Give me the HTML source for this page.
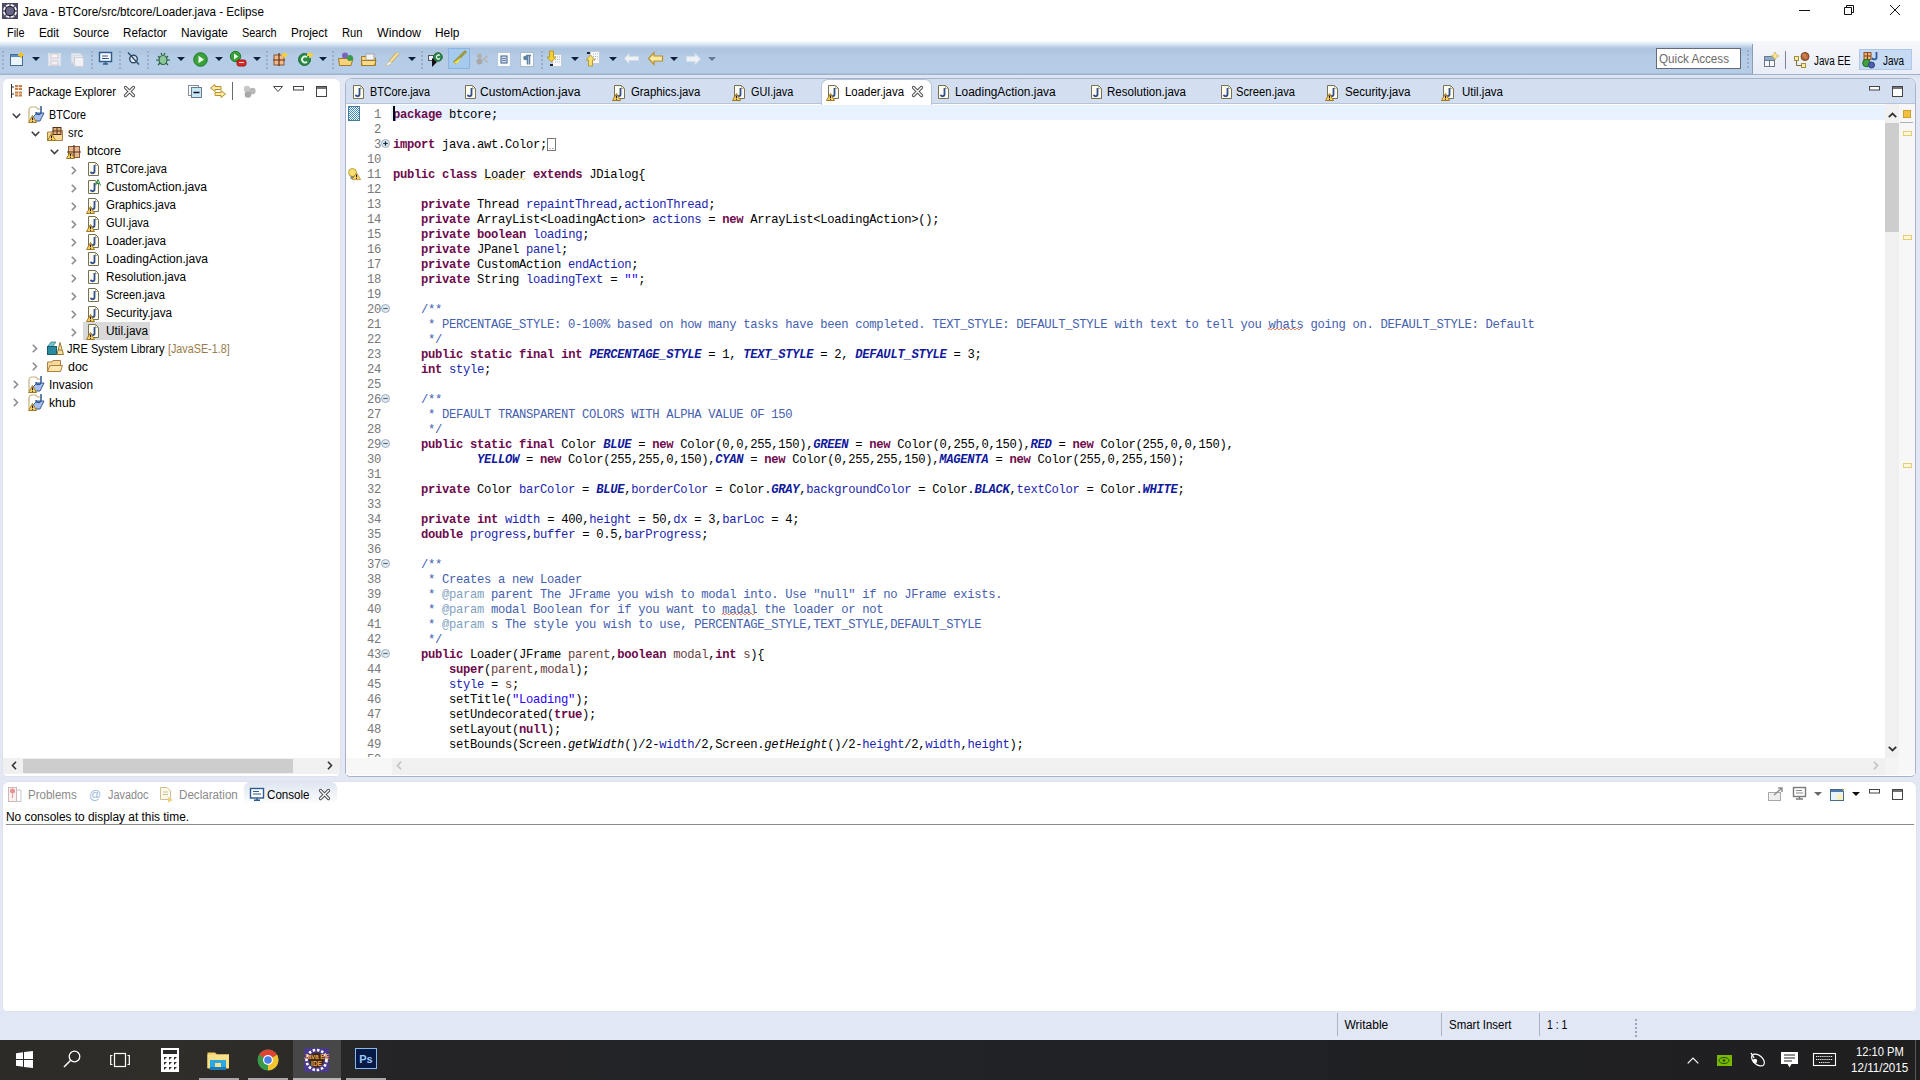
<!DOCTYPE html>
<html><head><meta charset="utf-8">
<style>
*{margin:0;padding:0;box-sizing:border-box}
html,body{width:1920px;height:1080px;overflow:hidden;background:#e3e8f4;font-family:"Liberation Sans",sans-serif;font-size:12px;color:#000;position:relative}
.a{position:absolute}
.t{position:absolute;white-space:pre;line-height:14px;transform-origin:0 0}
.code{position:absolute;font-family:"Liberation Mono",monospace;font-size:12.2px;letter-spacing:-0.31px;line-height:15px;white-space:pre;color:#000}
.k{color:#6e0a4c;font-weight:bold}
.f{color:#1a24b0}
.sf{color:#10189c;font-weight:bold;font-style:italic}
.c{color:#4460ae}
.tg{color:#7f9fbf}
.s{color:#2a00ff}
.p{color:#6a3e3e}
.i{font-style:italic}
svg{position:absolute;overflow:visible}
</style></head><body>
<!-- title + menu -->
<div class="a" style="left:0;top:0;width:1920px;height:42px;background:#fff"></div>
<!-- toolbar -->
<div class="a" style="left:0;top:41px;width:1920px;height:34px;background:linear-gradient(#fafcfe 0,#e8f0f8 2px,#c8d9ec 5px,#afc6e0 7px,#afc7e1 12px,#b4cce6 15px,#b5cde6 32px,#9fb3cc 33px)"></div>
<div class="a" style="left:0;top:75px;width:1920px;height:3px;background:#dde5f3"></div>
<!-- quick access + perspectives -->
<div class="a" style="left:1656px;top:48px;width:85px;height:21px;background:#fff;border:1px solid #646a78"></div>
<div class="a" style="left:1753px;top:42px;width:167px;height:32px;background:linear-gradient(#f5f7fb,#e9edf6)"></div>
<div class="a" style="left:1752px;top:44px;width:1px;height:30px;background:#8e9cb4"></div>
<div class="a" style="left:1859px;top:49px;width:53px;height:21px;background:#c6dbf3;border:1px solid #b0c8e8"></div>

<!-- package explorer panel -->
<div class="a" style="left:2px;top:78px;width:339px;height:699px;background:#fff;border:1px solid #dde3ee;border-radius:7px 7px 5px 5px"></div>
<div class="a" style="left:3px;top:79px;width:337px;height:25px;background:#fff;border-radius:6px 6px 0 0"></div>
<div class="a" style="left:83px;top:322px;width:67px;height:18px;background:#d9d9d9"></div>
<!-- PE h scrollbar -->
<div class="a" style="left:3px;top:758px;width:337px;height:16px;background:#f0f0f0"></div>
<div class="a" style="left:23px;top:759px;width:270px;height:14px;background:#cdcdcd"></div>

<!-- editor panel -->
<div class="a" style="left:345px;top:78px;width:1571px;height:699px;background:#fff;border:1px solid #a5b4cb;border-radius:7px 7px 5px 5px;overflow:hidden">
  <div class="a" style="left:0;top:0;width:1569px;height:25px;background:#d3dff0;border-bottom:1px solid #b5c4d9"></div>
</div>
<div class="a" style="left:821px;top:79px;width:111px;height:26px;background:#fff;border:1px solid #b5c4d9;border-bottom:none;border-radius:7px 7px 0 0"></div>
<div class="a" style="left:391px;top:105px;width:1494px;height:15px;background:#e8f2fe"></div>
<!-- editor scrollbars -->
<div class="a" style="left:1885px;top:104px;width:14px;height:654px;background:#f0f0f0"></div>
<div class="a" style="left:1885px;top:123px;width:14px;height:109px;background:#cdcdcd"></div>
<div class="a" style="left:1899px;top:104px;width:16px;height:671px;background:#f7f7f7"></div>
<div class="a" style="left:1885px;top:758px;width:14px;height:17px;background:#f4f4f4"></div>
<div class="a" style="left:346px;top:758px;width:1539px;height:17px;background:#f0f0f0"></div>
<div class="a" style="left:346px;top:758px;width:46px;height:17px;background:#f7f7f7"></div>
<div class="a" style="left:362px;top:105px;width:22px;height:652px;overflow:hidden"><div class="code" style="left:0;top:3px;width:19px;text-align:right;color:#787878">1
2
3
10
11
12
13
14
15
16
17
18
19
20
21
22
23
24
25
26
27
28
29
30
31
32
33
34
35
36
37
38
39
40
41
42
43
44
45
46
47
48
49
50</div></div>
<div class="a" style="left:393px;top:105px;width:1490px;height:652px;overflow:hidden"><div class="code" style="left:0;top:3px;width:1490px"><span class="k">package</span> btcore;

<span class="k">import</span> java.awt.Color;

<span class="k">public</span> <span class="k">class</span> Loader <span class="k">extends</span> JDialog{

    <span class="k">private</span> Thread <span class="f">repaintThread</span>,<span class="f">actionThread</span>;
    <span class="k">private</span> ArrayList&lt;LoadingAction&gt; <span class="f">actions</span> = <span class="k">new</span> ArrayList&lt;LoadingAction&gt;();
    <span class="k">private</span> <span class="k">boolean</span> <span class="f">loading</span>;
    <span class="k">private</span> JPanel <span class="f">panel</span>;
    <span class="k">private</span> CustomAction <span class="f">endAction</span>;
    <span class="k">private</span> String <span class="f">loadingText</span> = <span class="s">&quot;&quot;</span>;

    <span class="c">/**</span>
    <span class="c"> * PERCENTAGE_STYLE: 0-100% based on how many tasks have been completed. TEXT_STYLE: DEFAULT_STYLE with text to tell you whats going on. DEFAULT_STYLE: Default</span>
    <span class="c"> */</span>
    <span class="k">public</span> <span class="k">static</span> <span class="k">final</span> <span class="k">int</span> <span class="sf">PERCENTAGE_STYLE</span> = 1, <span class="sf">TEXT_STYLE</span> = 2, <span class="sf">DEFAULT_STYLE</span> = 3;
    <span class="k">int</span> <span class="f">style</span>;

    <span class="c">/**</span>
    <span class="c"> * DEFAULT TRANSPARENT COLORS WITH ALPHA VALUE OF 150</span>
    <span class="c"> */</span>
    <span class="k">public</span> <span class="k">static</span> <span class="k">final</span> Color <span class="sf">BLUE</span> = <span class="k">new</span> Color(0,0,255,150),<span class="sf">GREEN</span> = <span class="k">new</span> Color(0,255,0,150),<span class="sf">RED</span> = <span class="k">new</span> Color(255,0,0,150),
            <span class="sf">YELLOW</span> = <span class="k">new</span> Color(255,255,0,150),<span class="sf">CYAN</span> = <span class="k">new</span> Color(0,255,255,150),<span class="sf">MAGENTA</span> = <span class="k">new</span> Color(255,0,255,150);

    <span class="k">private</span> Color <span class="f">barColor</span> = <span class="sf">BLUE</span>,<span class="f">borderColor</span> = Color.<span class="sf">GRAY</span>,<span class="f">backgroundColor</span> = Color.<span class="sf">BLACK</span>,<span class="f">textColor</span> = Color.<span class="sf">WHITE</span>;

    <span class="k">private</span> <span class="k">int</span> <span class="f">width</span> = 400,<span class="f">height</span> = 50,<span class="f">dx</span> = 3,<span class="f">barLoc</span> = 4;
    <span class="k">double</span> <span class="f">progress</span>,<span class="f">buffer</span> = 0.5,<span class="f">barProgress</span>;

    <span class="c">/**</span>
    <span class="c"> * Creates a new Loader</span>
    <span class="c"> * </span><span class="tg">@param</span><span class="c"> parent The JFrame you wish to modal into. Use &quot;null&quot; if no JFrame exists.</span>
    <span class="c"> * </span><span class="tg">@param</span><span class="c"> modal Boolean for if you want to madal the loader or not</span>
    <span class="c"> * </span><span class="tg">@param</span><span class="c"> s The style you wish to use, PERCENTAGE_STYLE,TEXT_STYLE,DEFAULT_STYLE</span>
    <span class="c"> */</span>
    <span class="k">public</span> Loader(JFrame <span class="p">parent</span>,<span class="k">boolean</span> <span class="p">modal</span>,<span class="k">int</span> <span class="p">s</span>){
        <span class="k">super</span>(<span class="p">parent</span>,<span class="p">modal</span>);
        <span class="f">style</span> = <span class="p">s</span>;
        setTitle(<span class="s">&quot;Loading&quot;</span>);
        setUndecorated(<span class="k">true</span>);
        setLayout(<span class="k">null</span>);
        setBounds(Screen.<span class="i">getWidth</span>()/2-<span class="f">width</span>/2,Screen.<span class="i">getHeight</span>()/2-<span class="f">height</span>/2,<span class="f">width</span>,<span class="f">height</span>);
</div></div>
<div class="a" style="left:393px;top:106px;width:2px;height:15px;background:#000"></div>

<!-- console panel -->
<div class="a" style="left:2px;top:781px;width:1915px;height:231px;background:#fff;border:1px solid #dde3ee;border-radius:7px 7px 5px 5px"></div>
<div class="a" style="left:244px;top:782px;width:93px;height:22px;background:linear-gradient(#dfe6f1,#f6f8fb 80%,#fff);border-radius:6px 6px 0 0"></div>
<div class="a" style="left:6px;top:824px;width:1908px;height:1px;background:#8c8c8c"></div>

<!-- status bar -->
<div class="a" style="left:0;top:1012px;width:1920px;height:28px;background:#e1e7f5"></div>
<div class="a" style="left:1337px;top:1013px;width:1px;height:23px;background:#a9b3c3"></div>
<div class="a" style="left:1441px;top:1013px;width:1px;height:23px;background:#a9b3c3"></div>
<div class="a" style="left:1539px;top:1013px;width:1px;height:23px;background:#a9b3c3"></div>

<!-- taskbar -->
<div class="a" style="left:0;top:1040px;width:1920px;height:40px;background:linear-gradient(90deg,#2b2a27 0,#302e29 150px,#2c2b28 280px,#242427 400px,#222326 700px,#202124 1300px,#1f1f20 1920px)"></div>
<div class="a" style="left:293px;top:1040px;width:48px;height:40px;background:#474747"></div>
<div class="a" style="left:199px;top:1078px;width:40px;height:2px;background:#a8a8a8"></div>
<div class="a" style="left:248px;top:1078px;width:40px;height:2px;background:#a8a8a8"></div>
<div class="a" style="left:293px;top:1078px;width:48px;height:2px;background:#b8b8b8"></div>
<div class="a" style="left:346px;top:1078px;width:40px;height:2px;background:#a8a8a8"></div>

<svg style="left:2px;top:3px" width="16" height="16" viewBox="0 0 16 16"><rect x="0" y="0" width="16" height="16" fill="#4c4862"/><circle cx="8" cy="8" r="7" fill="#fff"/><path d="M8 1V3M8 13V15M1 8H3M13 8H15M3 3L4.5 4.5M13 3L11.5 4.5M3 13L4.5 11.5M13 13L11.5 11.5" stroke="#4c4862" stroke-width="1.3"/><circle cx="8" cy="8" r="4.6" fill="#6a6688" stroke="#25223a" stroke-width="1.3"/></svg>
<svg style="left:1799px;top:10px" width="11" height="1" viewBox="0 0 11 1"><rect width="11" height="1" fill="#111"/></svg>
<svg style="left:1844px;top:5px" width="10" height="10" viewBox="0 0 10 10"><path d="M2.5 2.5V0.5H9.5V7.5H7.5M0.5 2.5H7.5V9.5H0.5Z" fill="none" stroke="#111"/></svg>
<svg style="left:1890px;top:5px" width="10" height="10" viewBox="0 0 10 10"><path d="M0 0L10 10M10 0L0 10" stroke="#111" stroke-width="1"/></svg>
<div class="a" style="left:2px;top:51px;width:2px;height:2px;background:#9aaecb"></div>
<div class="a" style="left:2px;top:55px;width:2px;height:2px;background:#9aaecb"></div>
<div class="a" style="left:2px;top:59px;width:2px;height:2px;background:#9aaecb"></div>
<div class="a" style="left:2px;top:63px;width:2px;height:2px;background:#9aaecb"></div>
<div class="a" style="left:2px;top:67px;width:2px;height:2px;background:#9aaecb"></div>
<div class="a" style="left:91px;top:51px;width:2px;height:2px;background:#9aaecb"></div>
<div class="a" style="left:91px;top:55px;width:2px;height:2px;background:#9aaecb"></div>
<div class="a" style="left:91px;top:59px;width:2px;height:2px;background:#9aaecb"></div>
<div class="a" style="left:91px;top:63px;width:2px;height:2px;background:#9aaecb"></div>
<div class="a" style="left:91px;top:67px;width:2px;height:2px;background:#9aaecb"></div>
<div class="a" style="left:119px;top:51px;width:2px;height:2px;background:#9aaecb"></div>
<div class="a" style="left:119px;top:55px;width:2px;height:2px;background:#9aaecb"></div>
<div class="a" style="left:119px;top:59px;width:2px;height:2px;background:#9aaecb"></div>
<div class="a" style="left:119px;top:63px;width:2px;height:2px;background:#9aaecb"></div>
<div class="a" style="left:119px;top:67px;width:2px;height:2px;background:#9aaecb"></div>
<div class="a" style="left:147px;top:51px;width:2px;height:2px;background:#9aaecb"></div>
<div class="a" style="left:147px;top:55px;width:2px;height:2px;background:#9aaecb"></div>
<div class="a" style="left:147px;top:59px;width:2px;height:2px;background:#9aaecb"></div>
<div class="a" style="left:147px;top:63px;width:2px;height:2px;background:#9aaecb"></div>
<div class="a" style="left:147px;top:67px;width:2px;height:2px;background:#9aaecb"></div>
<div class="a" style="left:266px;top:51px;width:2px;height:2px;background:#9aaecb"></div>
<div class="a" style="left:266px;top:55px;width:2px;height:2px;background:#9aaecb"></div>
<div class="a" style="left:266px;top:59px;width:2px;height:2px;background:#9aaecb"></div>
<div class="a" style="left:266px;top:63px;width:2px;height:2px;background:#9aaecb"></div>
<div class="a" style="left:266px;top:67px;width:2px;height:2px;background:#9aaecb"></div>
<div class="a" style="left:332px;top:51px;width:2px;height:2px;background:#9aaecb"></div>
<div class="a" style="left:332px;top:55px;width:2px;height:2px;background:#9aaecb"></div>
<div class="a" style="left:332px;top:59px;width:2px;height:2px;background:#9aaecb"></div>
<div class="a" style="left:332px;top:63px;width:2px;height:2px;background:#9aaecb"></div>
<div class="a" style="left:332px;top:67px;width:2px;height:2px;background:#9aaecb"></div>
<div class="a" style="left:421px;top:51px;width:2px;height:2px;background:#9aaecb"></div>
<div class="a" style="left:421px;top:55px;width:2px;height:2px;background:#9aaecb"></div>
<div class="a" style="left:421px;top:59px;width:2px;height:2px;background:#9aaecb"></div>
<div class="a" style="left:421px;top:63px;width:2px;height:2px;background:#9aaecb"></div>
<div class="a" style="left:421px;top:67px;width:2px;height:2px;background:#9aaecb"></div>
<div class="a" style="left:541px;top:51px;width:2px;height:2px;background:#9aaecb"></div>
<div class="a" style="left:541px;top:55px;width:2px;height:2px;background:#9aaecb"></div>
<div class="a" style="left:541px;top:59px;width:2px;height:2px;background:#9aaecb"></div>
<div class="a" style="left:541px;top:63px;width:2px;height:2px;background:#9aaecb"></div>
<div class="a" style="left:541px;top:67px;width:2px;height:2px;background:#9aaecb"></div>
<svg style="left:10px;top:52px" width="15" height="15" viewBox="0 0 15 15"><rect x="0.5" y="2.5" width="12" height="11" fill="#eaf4fc" stroke="#4a6a8a"/><rect x="1" y="3" width="11" height="2" fill="#5a8ac0"/><path d="M11 0V6M8 3H14" stroke="#f0c030" stroke-width="2"/></svg>
<svg style="left:32px;top:57px" width="8" height="4" viewBox="0 0 8 4"><path d="M0 0H8L4 4Z" fill="#10203a"/></svg>
<svg style="left:48px;top:53px" width="13" height="13" viewBox="0 0 13 13"><rect x="0.5" y="0.5" width="12" height="12" fill="#e6ecf3" stroke="#d8dfe8"/><rect x="3" y="1" width="7" height="4" fill="#f4f6f8" stroke="#d6c6cc"/><rect x="3" y="8" width="7" height="4" fill="#f0f0f4" stroke="#d6c6cc"/></svg>
<svg style="left:71px;top:53px" width="13" height="14" viewBox="0 0 13 14"><rect x="0.5" y="0.5" width="9" height="9" fill="#e2e8f0" stroke="#d6dde6"/><rect x="2.5" y="2.5" width="9" height="9" fill="#e6ecf3" stroke="#d6dde6"/><rect x="3.5" y="4.5" width="9" height="9" fill="#eef1f5" stroke="#d8cdd2"/></svg>
<svg style="left:99px;top:52px" width="13" height="13" viewBox="0 0 13 13"><rect x="0.5" y="0.5" width="12" height="9" fill="#fff" stroke="#2e5b8e" stroke-width="1.5"/><path d="M3 4H9M3 6.5H10" stroke="#2e5b8e" stroke-width="1.2"/><path d="M4 12H9M6.5 10V12" stroke="#2e5b8e" stroke-width="1.5"/></svg>
<svg style="left:127px;top:52px" width="13" height="13" viewBox="0 0 13 13"><circle cx="6.5" cy="7" r="3.8" fill="#dfe8f2" stroke="#2e4a68" stroke-width="1.4"/><path d="M1 0.5L12 12.5" stroke="#2e4a68" stroke-width="1.3"/></svg>
<svg style="left:155px;top:52px" width="16" height="15" viewBox="0 0 16 15"><ellipse cx="8" cy="8" rx="4" ry="4.5" fill="#8ec89a" stroke="#2a6a48" stroke-width="1.2"/><path d="M3 4L5 6M13 4L11 6M1 8H4M15 8H12M3 13L5 11M13 13L11 11M6 1L7 3M10 1L9 3" stroke="#2a5a40" stroke-width="1.2"/></svg>
<svg style="left:177px;top:57px" width="8" height="4" viewBox="0 0 8 4"><path d="M0 0H8L4 4Z" fill="#10203a"/></svg>
<svg style="left:193px;top:52px" width="15" height="15" viewBox="0 0 15 15"><circle cx="7.5" cy="7.5" r="6.8" fill="#3aa03a" stroke="#1f7a2a"/><path d="M5.5 3.8V11.2L11 7.5Z" fill="#f2fff0"/></svg>
<svg style="left:215px;top:57px" width="8" height="4" viewBox="0 0 8 4"><path d="M0 0H8L4 4Z" fill="#10203a"/></svg>
<svg style="left:230px;top:51px" width="17" height="16" viewBox="0 0 17 16"><circle cx="5.5" cy="5.5" r="5.2" fill="#3aa03a" stroke="#1f7a2a"/><path d="M4 2.5V8.5L8.2 5.5Z" fill="#eaffea"/><rect x="7" y="9" width="9" height="6" rx="2" fill="#d82828" stroke="#a01818"/><path d="M9 11.5H14" stroke="#fff" stroke-width=".8"/></svg>
<svg style="left:253px;top:57px" width="8" height="4" viewBox="0 0 8 4"><path d="M0 0H8L4 4Z" fill="#10203a"/></svg>
<svg style="left:273px;top:52px" width="15" height="14" viewBox="0 0 15 14"><rect x="1" y="3" width="10" height="10" fill="#f2b888" stroke="#8a5030"/><path d="M6 1V14M0 8H12" stroke="#5a3018" stroke-width="1.2"/><path d="M11.5 0V6M8.5 3H14.5" stroke="#f4d040" stroke-width="2"/></svg>
<svg style="left:298px;top:52px" width="15" height="14" viewBox="0 0 15 14"><circle cx="6.5" cy="7.5" r="6" fill="#2f8a48" stroke="#1f6a38"/><path d="M9 5.2A3 3 0 1 0 9 9.8" fill="none" stroke="#e8ffe8" stroke-width="1.8"/><path d="M12 0V6M9 3H15" stroke="#f4d040" stroke-width="2"/></svg>
<svg style="left:319px;top:57px" width="8" height="4" viewBox="0 0 8 4"><path d="M0 0H8L4 4Z" fill="#10203a"/></svg>
<svg style="left:338px;top:52px" width="16" height="14" viewBox="0 0 16 14"><path d="M0.5 6.5H15L13 13.5H1.5Z" fill="#f6d27a" stroke="#a0782a"/><circle cx="7" cy="3.5" r="3" fill="#7a62c0"/><circle cx="12" cy="6" r="3" fill="#3a9a4a"/></svg>
<svg style="left:361px;top:53px" width="16" height="13" viewBox="0 0 16 13"><path d="M0.5 3.5H6L7 5H14.5V12.5H0.5Z" fill="#f6d27a" stroke="#a0782a"/><rect x="5" y="1" width="8" height="6" fill="#f4f4f4" stroke="#aaa"/><path d="M0.5 7.5H15L13.5 12.5H1Z" fill="#f8dc8a" stroke="#a0782a"/></svg>
<svg style="left:384px;top:52px" width="16" height="14" viewBox="0 0 16 14"><path d="M14 1L6 10" stroke="#c8a860" stroke-width="4"/><path d="M14 1L6 10" stroke="#f4e0a0" stroke-width="2"/><path d="M6 9L1 13.5L4 13.5L8 11Z" fill="#f4f4f0" stroke="#c0b090" stroke-width=".7"/></svg>
<svg style="left:408px;top:57px" width="8" height="4" viewBox="0 0 8 4"><path d="M0 0H8L4 4Z" fill="#10203a"/></svg>
<svg style="left:428px;top:52px" width="15" height="15" viewBox="0 0 15 15"><rect x="0.5" y="3.5" width="5" height="5" fill="#eef" stroke="#555"/><path d="M4 6V15L9 10Z" fill="#111"/><circle cx="10" cy="5" r="4.3" fill="#2f8a48" stroke="#1f6a38"/><path d="M11.8 3.5A2 2 0 1 0 11.8 6.5" fill="none" stroke="#fff" stroke-width="1.2"/></svg>
<div class="a" style="left:448px;top:48px;width:22px;height:21px;background:#a6c9ee;border:1px solid #8ab4e4"></div>
<svg style="left:452px;top:51px" width="15" height="14" viewBox="0 0 15 14"><path d="M14 0L2 12" stroke="#9a9840" stroke-width="3"/><path d="M9 6L1 12.5L6 12Z" fill="#f0e040"/></svg>
<svg style="left:475px;top:52px" width="14" height="13" viewBox="0 0 14 13"><circle cx="4.5" cy="4" r="2.5" fill="#b0b0b0"/><circle cx="4.5" cy="9.5" r="3" fill="#a8a8a8"/><path d="M8 7L13 4M8 7L13 10" stroke="#b6b6b6" stroke-width="2"/></svg>
<svg style="left:497px;top:52px" width="14" height="15" viewBox="0 0 14 15"><rect x="0.5" y="0.5" width="13" height="14" fill="#f8fafc" stroke="#9aa8b8" stroke-dasharray="1 1"/><rect x="4" y="4" width="6" height="7" fill="#dfe6f0" stroke="#3a5a8a"/><path d="M5 6.5H9M5 8.5H9" stroke="#3a5a8a" stroke-width=".8"/></svg>
<svg style="left:520px;top:52px" width="14" height="15" viewBox="0 0 14 15"><rect x="0.5" y="0.5" width="13" height="14" fill="#fafcfd" stroke="#a8b8c8"/><path d="M6 3.5H11M7.5 3.5V12.5M9.5 3.5V12.5" stroke="#6080a0" stroke-width="1.5"/><circle cx="5.5" cy="6" r="2.3" fill="#6080a0"/></svg>
<svg style="left:547px;top:51px" width="15" height="16" viewBox="0 0 15 16"><rect x="5.5" y="3.5" width="9" height="12" fill="#f6f8fb" stroke="#c0ccd8"/><path d="M8 6H13M8 8.5H13M8 11H13" stroke="#b0b8c8" stroke-dasharray="1 1"/><path d="M2.5 0H6.5V6H9L4.5 11L0 6H2.5Z" fill="#f6d030" stroke="#b08a20" stroke-width=".8"/><rect x="3" y="13" width="3" height="2" fill="#223"/></svg>
<svg style="left:571px;top:57px" width="8" height="4" viewBox="0 0 8 4"><path d="M0 0H8L4 4Z" fill="#10203a"/></svg>
<svg style="left:586px;top:51px" width="14" height="16" viewBox="0 0 14 16"><rect x="4.5" y="0.5" width="9" height="12" fill="#f6f8fb" stroke="#c0ccd8"/><path d="M7 3H12M7 5.5H12M7 8H12" stroke="#b0b8c8" stroke-dasharray="1 1"/><path d="M2.5 15H6.5V9H9L4.5 4L0 9H2.5Z" fill="#f6e070" stroke="#b08a20" stroke-width=".8"/><rect x="1" y="1" width="3" height="2" fill="#223"/></svg>
<svg style="left:609px;top:57px" width="8" height="4" viewBox="0 0 8 4"><path d="M0 0H8L4 4Z" fill="#10203a"/></svg>
<svg style="left:624px;top:53px" width="15" height="11" viewBox="0 0 15 11"><path d="M5 0.5L0.5 5.5L5 10.5V7.5H14.5V3.5H5Z" fill="#eef2f7" stroke="#d4dce6"/></svg>
<svg style="left:648px;top:52px" width="15" height="13" viewBox="0 0 15 13"><path d="M6 0.5L0.5 6.5L6 12.5V9H14.5V4H6Z" fill="#fbeaa0" stroke="#b89030" stroke-width="1.2"/></svg>
<svg style="left:670px;top:57px" width="8" height="4" viewBox="0 0 8 4"><path d="M0 0H8L4 4Z" fill="#10203a"/></svg>
<svg style="left:686px;top:53px" width="15" height="12" viewBox="0 0 15 12"><path d="M9 0.5L14.5 6L9 11.5V8.5H0.5V3.5H9Z" fill="#eef2f7" stroke="#d4dce6"/></svg>
<svg style="left:708px;top:57px" width="8" height="4" viewBox="0 0 8 4"><path d="M0 0H8L4 4Z" fill="#6a7a90"/></svg>
<div class="a" style="left:1747px;top:50px;width:2px;height:2px;background:#9aaecb"></div>
<div class="a" style="left:1747px;top:54px;width:2px;height:2px;background:#9aaecb"></div>
<div class="a" style="left:1747px;top:58px;width:2px;height:2px;background:#9aaecb"></div>
<div class="a" style="left:1747px;top:62px;width:2px;height:2px;background:#9aaecb"></div>
<div class="a" style="left:1747px;top:66px;width:2px;height:2px;background:#9aaecb"></div>
<svg style="left:1764px;top:52px" width="15" height="15" viewBox="0 0 15 15"><rect x="0.5" y="4.5" width="10" height="10" fill="#f6f8fa" stroke="#6a7888"/><path d="M0.5 8.5H10.5M5.5 4.5V14.5" stroke="#6a7888"/><rect x="1" y="5" width="9" height="3" fill="#8aaad0"/><path d="M11 0L12.5 3L15 4L12.5 5L11 8L9.5 5L7 4L9.5 3Z" fill="#f8e890" stroke="#c8a040" stroke-width=".6"/></svg>
<div class="a" style="left:1785px;top:51px;width:1px;height:18px;background:#7a8494"></div>
<svg style="left:1794px;top:52px" width="16" height="16" viewBox="0 0 16 16"><rect x="0.5" y="4.5" width="4" height="4" fill="#f8f0a0" stroke="#a09040"/><rect x="7.5" y="11.5" width="4" height="4" fill="#f8f0a0" stroke="#a09040"/><path d="M2.5 8.5V13.5H7.5" fill="none" stroke="#806a40"/><circle cx="11" cy="4.5" r="4" fill="#b86a3a" stroke="#7a4020"/><path d="M8.5 3L13 6.5M9 2L12 4" stroke="#e0a070" stroke-width=".8"/></svg>
<svg style="left:1862px;top:52px" width="17" height="16" viewBox="0 0 17 16"><rect x="2" y="0.5" width="7" height="7" fill="#f0b070" stroke="#8a5030"/><path d="M5.5 0.5V7.5M2 4H9" stroke="#7a4020"/><path d="M14.5 0V6A2.5 2.5 0 0 1 10 6" fill="none" stroke="#2f5a98" stroke-width="1.8"/><circle cx="4.5" cy="11" r="3.8" fill="#40a040" stroke="#206a20"/><circle cx="9.5" cy="13" r="3" fill="#5060b0" stroke="#304080"/></svg>
<svg style="left:10px;top:84px" width="13" height="14" viewBox="0 0 13 14"><path d="M1.5 0V14" stroke="#333" stroke-width="1"/><path d="M1.5 3H4M1.5 10H4" stroke="#333"/><rect x="5" y="1" width="7" height="5" fill="#c8804a"/><rect x="5" y="7.5" width="7" height="5" fill="#c8804a"/><path d="M8.5 1V6M5 3.5H12M8.5 7.5V12.5M5 10H12" stroke="#fff" stroke-width=".7"/></svg>
<svg style="left:124px;top:86px" width="11" height="11" viewBox="0 0 11 11"><path d="M1.5 1.5L9.5 9.5M9.5 1.5L1.5 9.5" stroke="#4a4a4a" stroke-width="3.2" stroke-linecap="round"/><path d="M1.5 1.5L9.5 9.5M9.5 1.5L1.5 9.5" stroke="#fff" stroke-width="1.4" stroke-linecap="round"/></svg>
<svg style="left:188px;top:85px" width="14" height="13" viewBox="0 0 14 13"><rect x="0.5" y="0.5" width="10" height="10" fill="#fff" stroke="#8090a0"/><rect x="3.5" y="2.5" width="10" height="10" fill="#c8e8f8" stroke="#6a7a8a"/><path d="M5.5 7.5H11.5" stroke="#111" stroke-width="1.5"/></svg>
<svg style="left:210px;top:84px" width="16" height="15" viewBox="0 0 16 15"><path d="M5 0.5L0.5 4L5 7.5V5.5H11V2.5H5Z" fill="#fbe9a8" stroke="#b8902a"/><path d="M11 6.5L15.5 10L11 13.5V11.5H5V8.5H11Z" fill="#fbe9a8" stroke="#b8902a"/></svg>
<div class="a" style="left:232px;top:82px;width:1px;height:18px;background:#6a6a6a"></div>
<svg style="left:243px;top:85px" width="13" height="13" viewBox="0 0 13 13"><circle cx="4" cy="4" r="3.2" fill="#c8c8c8"/><circle cx="9.5" cy="6" r="3.2" fill="#b8b8b8"/><circle cx="5" cy="9.5" r="3.3" fill="#a8a8a8"/></svg>
<svg style="left:273px;top:86px" width="10" height="6" viewBox="0 0 10 6"><path d="M0.5 0.5H9.5L5 5.5Z" fill="#fff" stroke="#444"/></svg>
<svg style="left:293px;top:86px" width="11" height="5" viewBox="0 0 11 5"><rect x="0.5" y="0.5" width="10" height="3.5" fill="#fff" stroke="#444"/></svg>
<svg style="left:316px;top:86px" width="11" height="11" viewBox="0 0 11 11"><rect x="0.5" y="0.5" width="10" height="10" fill="#fff" stroke="#444"/><path d="M0.5 2H10.5" stroke="#444" stroke-width="1.5"/></svg>
<svg style="left:12px;top:113px" width="9" height="6" viewBox="0 0 9 6"><path d="M0.8 0.8L4.5 4.5L8.2 0.8" fill="none" stroke="#404040" stroke-width="1.6"/></svg>
<svg style="left:28px;top:106px" width="17" height="17" viewBox="0 0 17 17"><path d="M1 15V4A3 3 0 0 1 4 1H8L9.5 3H13" fill="none" stroke="#c8b080" stroke-width="1.2"/><path d="M5 11L9 7H16L12 15H5Z" fill="#a8c0f0" stroke="#3a5a90"/><path d="M13 0V6A2.5 2.5 0 0 1 8 6" fill="none" stroke="#2f5a98" stroke-width="1.5"/></svg>
<svg style="left:28px;top:115px" width="9" height="8" viewBox="0 0 9 8"><path d="M4.5 0.5L8.5 7.5H0.5Z" fill="#fad465" stroke="#a07828" stroke-width="1" stroke-linejoin="round"/><path d="M4.5 2.6V5M4.5 5.8V6.8" stroke="#1a1a1a" stroke-width="1.1"/></svg>
<svg style="left:31px;top:131px" width="9" height="6" viewBox="0 0 9 6"><path d="M0.8 0.8L4.5 4.5L8.2 0.8" fill="none" stroke="#404040" stroke-width="1.6"/></svg>
<svg style="left:47px;top:127px" width="16" height="14" viewBox="0 0 16 14"><path d="M0.5 13.5V5H5L6 3.5H15.5V13.5Z" fill="#f6d89a" stroke="#b08040"/><rect x="6" y="0.5" width="8" height="7" fill="#e0b080" stroke="#5a3018"/><path d="M10 0.5V7.5M6 4H14" stroke="#5a3018"/></svg>
<svg style="left:47px;top:133px" width="9" height="8" viewBox="0 0 9 8"><path d="M4.5 0.5L8.5 7.5H0.5Z" fill="#fad465" stroke="#a07828" stroke-width="1" stroke-linejoin="round"/><path d="M4.5 2.6V5M4.5 5.8V6.8" stroke="#1a1a1a" stroke-width="1.1"/></svg>
<svg style="left:50px;top:149px" width="9" height="6" viewBox="0 0 9 6"><path d="M0.8 0.8L4.5 4.5L8.2 0.8" fill="none" stroke="#404040" stroke-width="1.6"/></svg>
<svg style="left:66px;top:145px" width="15" height="13" viewBox="0 0 15 13"><rect x="2.5" y="1.5" width="11" height="11" fill="#e6b894" stroke="#8a5a38"/><path d="M8 0V13M1 7H15" stroke="#5a3018" stroke-width="1.2"/></svg>
<svg style="left:66px;top:151px" width="9" height="8" viewBox="0 0 9 8"><path d="M4.5 0.5L8.5 7.5H0.5Z" fill="#fad465" stroke="#a07828" stroke-width="1" stroke-linejoin="round"/><path d="M4.5 2.6V5M4.5 5.8V6.8" stroke="#1a1a1a" stroke-width="1.1"/></svg>
<svg style="left:71px;top:166px" width="6" height="9" viewBox="0 0 6 9"><path d="M0.8 0.8L4.5 4.5L0.8 8.2" fill="none" stroke="#8c8c8c" stroke-width="1.6"/></svg>
<svg style="left:88px;top:162px" width="11" height="14" viewBox="0 0 11 14"><path d="M0.5 0.5H7.5L10.5 3.5V13.5H0.5Z" fill="#fcfcf2" stroke="#767252"/><path d="M7.5 0.5V3.5H10.5" fill="none" stroke="#a8a478" stroke-width=".8"/><path d="M6.5 3V9A2 2 0 0 1 2.6 9.8" fill="none" stroke="#34508a" stroke-width="1.8"/></svg>
<svg style="left:71px;top:184px" width="6" height="9" viewBox="0 0 6 9"><path d="M0.8 0.8L4.5 4.5L0.8 8.2" fill="none" stroke="#8c8c8c" stroke-width="1.6"/></svg>
<svg style="left:88px;top:180px" width="11" height="14" viewBox="0 0 11 14"><path d="M0.5 0.5H7.5L10.5 3.5V13.5H0.5Z" fill="#fcfcf2" stroke="#767252"/><path d="M7.5 0.5V3.5H10.5" fill="none" stroke="#a8a478" stroke-width=".8"/><path d="M6.5 3V9A2 2 0 0 1 2.6 9.8" fill="none" stroke="#34508a" stroke-width="1.8"/></svg>
<svg style="left:95px;top:179px" width="6" height="7" viewBox="0 0 6 7"><path d="M0.5 6.5L3 0.5L5.5 6.5M1.5 4.5H4.5" fill="none" stroke="#2a8a40" stroke-width="1"/></svg>
<svg style="left:71px;top:202px" width="6" height="9" viewBox="0 0 6 9"><path d="M0.8 0.8L4.5 4.5L0.8 8.2" fill="none" stroke="#8c8c8c" stroke-width="1.6"/></svg>
<svg style="left:88px;top:198px" width="11" height="14" viewBox="0 0 11 14"><path d="M0.5 0.5H7.5L10.5 3.5V13.5H0.5Z" fill="#fcfcf2" stroke="#767252"/><path d="M7.5 0.5V3.5H10.5" fill="none" stroke="#a8a478" stroke-width=".8"/><path d="M6.5 3V9A2 2 0 0 1 2.6 9.8" fill="none" stroke="#34508a" stroke-width="1.8"/></svg>
<svg style="left:86px;top:206px" width="9" height="8" viewBox="0 0 9 8"><path d="M4.5 0.5L8.5 7.5H0.5Z" fill="#fad465" stroke="#a07828" stroke-width="1" stroke-linejoin="round"/><path d="M4.5 2.6V5M4.5 5.8V6.8" stroke="#1a1a1a" stroke-width="1.1"/></svg>
<svg style="left:71px;top:220px" width="6" height="9" viewBox="0 0 6 9"><path d="M0.8 0.8L4.5 4.5L0.8 8.2" fill="none" stroke="#8c8c8c" stroke-width="1.6"/></svg>
<svg style="left:88px;top:216px" width="11" height="14" viewBox="0 0 11 14"><path d="M0.5 0.5H7.5L10.5 3.5V13.5H0.5Z" fill="#fcfcf2" stroke="#767252"/><path d="M7.5 0.5V3.5H10.5" fill="none" stroke="#a8a478" stroke-width=".8"/><path d="M6.5 3V9A2 2 0 0 1 2.6 9.8" fill="none" stroke="#34508a" stroke-width="1.8"/></svg>
<svg style="left:86px;top:224px" width="9" height="8" viewBox="0 0 9 8"><path d="M4.5 0.5L8.5 7.5H0.5Z" fill="#fad465" stroke="#a07828" stroke-width="1" stroke-linejoin="round"/><path d="M4.5 2.6V5M4.5 5.8V6.8" stroke="#1a1a1a" stroke-width="1.1"/></svg>
<svg style="left:71px;top:238px" width="6" height="9" viewBox="0 0 6 9"><path d="M0.8 0.8L4.5 4.5L0.8 8.2" fill="none" stroke="#8c8c8c" stroke-width="1.6"/></svg>
<svg style="left:88px;top:234px" width="11" height="14" viewBox="0 0 11 14"><path d="M0.5 0.5H7.5L10.5 3.5V13.5H0.5Z" fill="#fcfcf2" stroke="#767252"/><path d="M7.5 0.5V3.5H10.5" fill="none" stroke="#a8a478" stroke-width=".8"/><path d="M6.5 3V9A2 2 0 0 1 2.6 9.8" fill="none" stroke="#34508a" stroke-width="1.8"/></svg>
<svg style="left:86px;top:242px" width="9" height="8" viewBox="0 0 9 8"><path d="M4.5 0.5L8.5 7.5H0.5Z" fill="#fad465" stroke="#a07828" stroke-width="1" stroke-linejoin="round"/><path d="M4.5 2.6V5M4.5 5.8V6.8" stroke="#1a1a1a" stroke-width="1.1"/></svg>
<svg style="left:71px;top:256px" width="6" height="9" viewBox="0 0 6 9"><path d="M0.8 0.8L4.5 4.5L0.8 8.2" fill="none" stroke="#8c8c8c" stroke-width="1.6"/></svg>
<svg style="left:88px;top:252px" width="11" height="14" viewBox="0 0 11 14"><path d="M0.5 0.5H7.5L10.5 3.5V13.5H0.5Z" fill="#fcfcf2" stroke="#767252"/><path d="M7.5 0.5V3.5H10.5" fill="none" stroke="#a8a478" stroke-width=".8"/><path d="M6.5 3V9A2 2 0 0 1 2.6 9.8" fill="none" stroke="#34508a" stroke-width="1.8"/></svg>
<svg style="left:71px;top:274px" width="6" height="9" viewBox="0 0 6 9"><path d="M0.8 0.8L4.5 4.5L0.8 8.2" fill="none" stroke="#8c8c8c" stroke-width="1.6"/></svg>
<svg style="left:88px;top:270px" width="11" height="14" viewBox="0 0 11 14"><path d="M0.5 0.5H7.5L10.5 3.5V13.5H0.5Z" fill="#fcfcf2" stroke="#767252"/><path d="M7.5 0.5V3.5H10.5" fill="none" stroke="#a8a478" stroke-width=".8"/><path d="M6.5 3V9A2 2 0 0 1 2.6 9.8" fill="none" stroke="#34508a" stroke-width="1.8"/></svg>
<svg style="left:71px;top:292px" width="6" height="9" viewBox="0 0 6 9"><path d="M0.8 0.8L4.5 4.5L0.8 8.2" fill="none" stroke="#8c8c8c" stroke-width="1.6"/></svg>
<svg style="left:88px;top:288px" width="11" height="14" viewBox="0 0 11 14"><path d="M0.5 0.5H7.5L10.5 3.5V13.5H0.5Z" fill="#fcfcf2" stroke="#767252"/><path d="M7.5 0.5V3.5H10.5" fill="none" stroke="#a8a478" stroke-width=".8"/><path d="M6.5 3V9A2 2 0 0 1 2.6 9.8" fill="none" stroke="#34508a" stroke-width="1.8"/></svg>
<svg style="left:71px;top:310px" width="6" height="9" viewBox="0 0 6 9"><path d="M0.8 0.8L4.5 4.5L0.8 8.2" fill="none" stroke="#8c8c8c" stroke-width="1.6"/></svg>
<svg style="left:88px;top:306px" width="11" height="14" viewBox="0 0 11 14"><path d="M0.5 0.5H7.5L10.5 3.5V13.5H0.5Z" fill="#fcfcf2" stroke="#767252"/><path d="M7.5 0.5V3.5H10.5" fill="none" stroke="#a8a478" stroke-width=".8"/><path d="M6.5 3V9A2 2 0 0 1 2.6 9.8" fill="none" stroke="#34508a" stroke-width="1.8"/></svg>
<svg style="left:86px;top:314px" width="9" height="8" viewBox="0 0 9 8"><path d="M4.5 0.5L8.5 7.5H0.5Z" fill="#fad465" stroke="#a07828" stroke-width="1" stroke-linejoin="round"/><path d="M4.5 2.6V5M4.5 5.8V6.8" stroke="#1a1a1a" stroke-width="1.1"/></svg>
<svg style="left:71px;top:328px" width="6" height="9" viewBox="0 0 6 9"><path d="M0.8 0.8L4.5 4.5L0.8 8.2" fill="none" stroke="#8c8c8c" stroke-width="1.6"/></svg>
<svg style="left:88px;top:324px" width="11" height="14" viewBox="0 0 11 14"><path d="M0.5 0.5H7.5L10.5 3.5V13.5H0.5Z" fill="#fcfcf2" stroke="#767252"/><path d="M7.5 0.5V3.5H10.5" fill="none" stroke="#a8a478" stroke-width=".8"/><path d="M6.5 3V9A2 2 0 0 1 2.6 9.8" fill="none" stroke="#34508a" stroke-width="1.8"/></svg>
<svg style="left:86px;top:332px" width="9" height="8" viewBox="0 0 9 8"><path d="M4.5 0.5L8.5 7.5H0.5Z" fill="#fad465" stroke="#a07828" stroke-width="1" stroke-linejoin="round"/><path d="M4.5 2.6V5M4.5 5.8V6.8" stroke="#1a1a1a" stroke-width="1.1"/></svg>
<svg style="left:32px;top:344px" width="6" height="9" viewBox="0 0 6 9"><path d="M0.8 0.8L4.5 4.5L0.8 8.2" fill="none" stroke="#8c8c8c" stroke-width="1.6"/></svg>
<svg style="left:47px;top:341px" width="17" height="14" viewBox="0 0 17 14"><rect x="0.5" y="5.5" width="9" height="8" fill="#2a8aa0" stroke="#1a5a6a"/><path d="M1 5L4 1H9L6 5" fill="#70c8c8" stroke="#1a5a6a" stroke-width=".6"/><path d="M10 13.5L13 1.5L16.5 13.5Z" fill="#f4e0a0" stroke="#9a7a30"/><path d="M11 9H15" stroke="#9a7a30"/></svg>
<svg style="left:32px;top:362px" width="6" height="9" viewBox="0 0 6 9"><path d="M0.8 0.8L4.5 4.5L0.8 8.2" fill="none" stroke="#8c8c8c" stroke-width="1.6"/></svg>
<svg style="left:47px;top:360px" width="16" height="12" viewBox="0 0 16 12"><path d="M0.5 11.5V2H5L6 0.5H13.5V11.5Z" fill="#f6d89a" stroke="#b08040"/><path d="M0.5 11.5L3 5.5H15.5L13.5 11.5Z" fill="#fbe6b0" stroke="#b08040"/></svg>
<svg style="left:13px;top:380px" width="6" height="9" viewBox="0 0 6 9"><path d="M0.8 0.8L4.5 4.5L0.8 8.2" fill="none" stroke="#8c8c8c" stroke-width="1.6"/></svg>
<svg style="left:28px;top:376px" width="17" height="17" viewBox="0 0 17 17"><path d="M1 15V4A3 3 0 0 1 4 1H8L9.5 3H13" fill="none" stroke="#c8b080" stroke-width="1.2"/><path d="M5 11L9 7H16L12 15H5Z" fill="#a8c0f0" stroke="#3a5a90"/><path d="M13 0V6A2.5 2.5 0 0 1 8 6" fill="none" stroke="#2f5a98" stroke-width="1.5"/></svg>
<svg style="left:28px;top:385px" width="9" height="8" viewBox="0 0 9 8"><path d="M4.5 0.5L8.5 7.5H0.5Z" fill="#fad465" stroke="#a07828" stroke-width="1" stroke-linejoin="round"/><path d="M4.5 2.6V5M4.5 5.8V6.8" stroke="#1a1a1a" stroke-width="1.1"/></svg>
<svg style="left:13px;top:398px" width="6" height="9" viewBox="0 0 6 9"><path d="M0.8 0.8L4.5 4.5L0.8 8.2" fill="none" stroke="#8c8c8c" stroke-width="1.6"/></svg>
<svg style="left:28px;top:394px" width="17" height="17" viewBox="0 0 17 17"><path d="M1 15V4A3 3 0 0 1 4 1H8L9.5 3H13" fill="none" stroke="#c8b080" stroke-width="1.2"/><path d="M5 11L9 7H16L12 15H5Z" fill="#a8c0f0" stroke="#3a5a90"/><path d="M13 0V6A2.5 2.5 0 0 1 8 6" fill="none" stroke="#2f5a98" stroke-width="1.5"/></svg>
<svg style="left:28px;top:403px" width="9" height="8" viewBox="0 0 9 8"><path d="M4.5 0.5L8.5 7.5H0.5Z" fill="#fad465" stroke="#a07828" stroke-width="1" stroke-linejoin="round"/><path d="M4.5 2.6V5M4.5 5.8V6.8" stroke="#1a1a1a" stroke-width="1.1"/></svg>
<svg style="left:11px;top:761px" width="6" height="9" viewBox="0 0 6 9"><path d="M5 0.8L1.5 4.5L5 8.2" fill="none" stroke="#333" stroke-width="1.6"/></svg>
<svg style="left:327px;top:761px" width="6" height="9" viewBox="0 0 6 9"><path d="M1 0.8L4.5 4.5L1 8.2" fill="none" stroke="#333" stroke-width="1.6"/></svg>
<svg style="left:353px;top:85px" width="11" height="14" viewBox="0 0 11 14"><path d="M0.5 0.5H7.5L10.5 3.5V13.5H0.5Z" fill="#fcfcf2" stroke="#767252"/><path d="M7.5 0.5V3.5H10.5" fill="none" stroke="#a8a478" stroke-width=".8"/><path d="M6.5 3V9A2 2 0 0 1 2.6 9.8" fill="none" stroke="#34508a" stroke-width="1.8"/></svg>
<svg style="left:465px;top:85px" width="11" height="14" viewBox="0 0 11 14"><path d="M0.5 0.5H7.5L10.5 3.5V13.5H0.5Z" fill="#fcfcf2" stroke="#767252"/><path d="M7.5 0.5V3.5H10.5" fill="none" stroke="#a8a478" stroke-width=".8"/><path d="M6.5 3V9A2 2 0 0 1 2.6 9.8" fill="none" stroke="#34508a" stroke-width="1.8"/></svg>
<svg style="left:614px;top:85px" width="11" height="14" viewBox="0 0 11 14"><path d="M0.5 0.5H7.5L10.5 3.5V13.5H0.5Z" fill="#fcfcf2" stroke="#767252"/><path d="M7.5 0.5V3.5H10.5" fill="none" stroke="#a8a478" stroke-width=".8"/><path d="M6.5 3V9A2 2 0 0 1 2.6 9.8" fill="none" stroke="#34508a" stroke-width="1.8"/></svg>
<svg style="left:612px;top:93px" width="9" height="8" viewBox="0 0 9 8"><path d="M4.5 0.5L8.5 7.5H0.5Z" fill="#fad465" stroke="#a07828" stroke-width="1" stroke-linejoin="round"/><path d="M4.5 2.6V5M4.5 5.8V6.8" stroke="#1a1a1a" stroke-width="1.1"/></svg>
<svg style="left:734px;top:85px" width="11" height="14" viewBox="0 0 11 14"><path d="M0.5 0.5H7.5L10.5 3.5V13.5H0.5Z" fill="#fcfcf2" stroke="#767252"/><path d="M7.5 0.5V3.5H10.5" fill="none" stroke="#a8a478" stroke-width=".8"/><path d="M6.5 3V9A2 2 0 0 1 2.6 9.8" fill="none" stroke="#34508a" stroke-width="1.8"/></svg>
<svg style="left:732px;top:93px" width="9" height="8" viewBox="0 0 9 8"><path d="M4.5 0.5L8.5 7.5H0.5Z" fill="#fad465" stroke="#a07828" stroke-width="1" stroke-linejoin="round"/><path d="M4.5 2.6V5M4.5 5.8V6.8" stroke="#1a1a1a" stroke-width="1.1"/></svg>
<svg style="left:828px;top:85px" width="11" height="14" viewBox="0 0 11 14"><path d="M0.5 0.5H7.5L10.5 3.5V13.5H0.5Z" fill="#fcfcf2" stroke="#767252"/><path d="M7.5 0.5V3.5H10.5" fill="none" stroke="#a8a478" stroke-width=".8"/><path d="M6.5 3V9A2 2 0 0 1 2.6 9.8" fill="none" stroke="#34508a" stroke-width="1.8"/></svg>
<svg style="left:826px;top:93px" width="9" height="8" viewBox="0 0 9 8"><path d="M4.5 0.5L8.5 7.5H0.5Z" fill="#fad465" stroke="#a07828" stroke-width="1" stroke-linejoin="round"/><path d="M4.5 2.6V5M4.5 5.8V6.8" stroke="#1a1a1a" stroke-width="1.1"/></svg>
<svg style="left:938px;top:85px" width="11" height="14" viewBox="0 0 11 14"><path d="M0.5 0.5H7.5L10.5 3.5V13.5H0.5Z" fill="#fcfcf2" stroke="#767252"/><path d="M7.5 0.5V3.5H10.5" fill="none" stroke="#a8a478" stroke-width=".8"/><path d="M6.5 3V9A2 2 0 0 1 2.6 9.8" fill="none" stroke="#34508a" stroke-width="1.8"/></svg>
<svg style="left:1091px;top:85px" width="11" height="14" viewBox="0 0 11 14"><path d="M0.5 0.5H7.5L10.5 3.5V13.5H0.5Z" fill="#fcfcf2" stroke="#767252"/><path d="M7.5 0.5V3.5H10.5" fill="none" stroke="#a8a478" stroke-width=".8"/><path d="M6.5 3V9A2 2 0 0 1 2.6 9.8" fill="none" stroke="#34508a" stroke-width="1.8"/></svg>
<svg style="left:1221px;top:85px" width="11" height="14" viewBox="0 0 11 14"><path d="M0.5 0.5H7.5L10.5 3.5V13.5H0.5Z" fill="#fcfcf2" stroke="#767252"/><path d="M7.5 0.5V3.5H10.5" fill="none" stroke="#a8a478" stroke-width=".8"/><path d="M6.5 3V9A2 2 0 0 1 2.6 9.8" fill="none" stroke="#34508a" stroke-width="1.8"/></svg>
<svg style="left:1327px;top:85px" width="11" height="14" viewBox="0 0 11 14"><path d="M0.5 0.5H7.5L10.5 3.5V13.5H0.5Z" fill="#fcfcf2" stroke="#767252"/><path d="M7.5 0.5V3.5H10.5" fill="none" stroke="#a8a478" stroke-width=".8"/><path d="M6.5 3V9A2 2 0 0 1 2.6 9.8" fill="none" stroke="#34508a" stroke-width="1.8"/></svg>
<svg style="left:1325px;top:93px" width="9" height="8" viewBox="0 0 9 8"><path d="M4.5 0.5L8.5 7.5H0.5Z" fill="#fad465" stroke="#a07828" stroke-width="1" stroke-linejoin="round"/><path d="M4.5 2.6V5M4.5 5.8V6.8" stroke="#1a1a1a" stroke-width="1.1"/></svg>
<svg style="left:1443px;top:85px" width="11" height="14" viewBox="0 0 11 14"><path d="M0.5 0.5H7.5L10.5 3.5V13.5H0.5Z" fill="#fcfcf2" stroke="#767252"/><path d="M7.5 0.5V3.5H10.5" fill="none" stroke="#a8a478" stroke-width=".8"/><path d="M6.5 3V9A2 2 0 0 1 2.6 9.8" fill="none" stroke="#34508a" stroke-width="1.8"/></svg>
<svg style="left:1441px;top:93px" width="9" height="8" viewBox="0 0 9 8"><path d="M4.5 0.5L8.5 7.5H0.5Z" fill="#fad465" stroke="#a07828" stroke-width="1" stroke-linejoin="round"/><path d="M4.5 2.6V5M4.5 5.8V6.8" stroke="#1a1a1a" stroke-width="1.1"/></svg>
<svg style="left:912px;top:86px" width="11" height="11" viewBox="0 0 11 11"><path d="M1.5 1.5L9.5 9.5M9.5 1.5L1.5 9.5" stroke="#4a4a4a" stroke-width="3.2" stroke-linecap="round"/><path d="M1.5 1.5L9.5 9.5M9.5 1.5L1.5 9.5" stroke="#fff" stroke-width="1.4" stroke-linecap="round"/></svg>
<svg style="left:1869px;top:86px" width="11" height="5" viewBox="0 0 11 5"><rect x="0.5" y="0.5" width="10" height="3.5" fill="#fff" stroke="#444"/></svg>
<svg style="left:1892px;top:86px" width="11" height="11" viewBox="0 0 11 11"><rect x="0.5" y="0.5" width="10" height="10" fill="#fff" stroke="#444"/><path d="M0.5 2H10.5" stroke="#444" stroke-width="1.5"/></svg>
<svg style="left:348px;top:106px" width="12" height="15" viewBox="0 0 12 15"><defs><pattern id="ck" width="2" height="2" patternUnits="userSpaceOnUse"><rect width="2" height="2" fill="#fff"/><rect width="1" height="1" fill="#3a8ac0"/><rect x="1" y="1" width="1" height="1" fill="#3a8ac0"/></pattern></defs><rect width="12" height="15" fill="url(#ck)"/><rect x="0.5" y="0.5" width="11" height="14" fill="none" stroke="#4a7a9a"/></svg>
<svg style="left:348px;top:168px" width="13" height="12" viewBox="0 0 13 12"><circle cx="4.5" cy="4.5" r="4" fill="#f8e070" stroke="#c0a040"/><rect x="2.5" y="8" width="4" height="3" fill="#8a8a70"/><path d="M8.5 4.5L12.7 11.7H4.3Z" fill="#f8d060" stroke="#b08830" stroke-width=".7"/><path d="M8.5 6.5V9.2M8.5 10.2V11" stroke="#111"/></svg>
<svg style="left:381px;top:139px" width="9" height="9" viewBox="0 0 9 9"><circle cx="4.5" cy="4.5" r="4" fill="#e2ecf4" stroke="#9aacbc"/><path d="M2.2 4.5H6.8" stroke="#1a3040" stroke-width="1.2"/><path d="M4.5 2.2V6.8" stroke="#1a3040" stroke-width="1.2"/></svg>
<svg style="left:381px;top:304px" width="9" height="9" viewBox="0 0 9 9"><circle cx="4.5" cy="4.5" r="4" fill="#e2ecf4" stroke="#9aacbc"/><path d="M2.2 4.5H6.8" stroke="#5a6a7a" stroke-width="1.2"/></svg>
<svg style="left:381px;top:394px" width="9" height="9" viewBox="0 0 9 9"><circle cx="4.5" cy="4.5" r="4" fill="#e2ecf4" stroke="#9aacbc"/><path d="M2.2 4.5H6.8" stroke="#5a6a7a" stroke-width="1.2"/></svg>
<svg style="left:381px;top:439px" width="9" height="9" viewBox="0 0 9 9"><circle cx="4.5" cy="4.5" r="4" fill="#e2ecf4" stroke="#9aacbc"/><path d="M2.2 4.5H6.8" stroke="#5a6a7a" stroke-width="1.2"/></svg>
<svg style="left:381px;top:559px" width="9" height="9" viewBox="0 0 9 9"><circle cx="4.5" cy="4.5" r="4" fill="#e2ecf4" stroke="#9aacbc"/><path d="M2.2 4.5H6.8" stroke="#5a6a7a" stroke-width="1.2"/></svg>
<svg style="left:381px;top:649px" width="9" height="9" viewBox="0 0 9 9"><circle cx="4.5" cy="4.5" r="4" fill="#e2ecf4" stroke="#9aacbc"/><path d="M2.2 4.5H6.8" stroke="#5a6a7a" stroke-width="1.2"/></svg>
<svg style="left:547px;top:138px" width="9" height="13" viewBox="0 0 9 13"><rect x="0.5" y="0.5" width="8" height="12" fill="#fff" stroke="#777"/><path d="M2.5 10.5H3.5M5.5 10.5H6.5" stroke="#777"/></svg>
<svg style="left:484px;top:178px" width="43" height="3" viewBox="0 0 43 3"><path d="M0 2L1 0L3 2L5 0L7 2L9 0L11 2L13 0L15 2L17 0L19 2L21 0L23 2L25 0L27 2L29 0L31 2L33 0L35 2L37 0L39 2L41 0" fill="none" stroke="#e8d070" stroke-width="0.9"/></svg>
<svg style="left:1268px;top:328px" width="35" height="3" viewBox="0 0 35 3"><path d="M0 2L1 0L3 2L5 0L7 2L9 0L11 2L13 0L15 2L17 0L19 2L21 0L23 2L25 0L27 2L29 0L31 2L33 0" fill="none" stroke="#e87050" stroke-width="0.9"/></svg>
<svg style="left:722px;top:613px" width="35" height="3" viewBox="0 0 35 3"><path d="M0 2L1 0L3 2L5 0L7 2L9 0L11 2L13 0L15 2L17 0L19 2L21 0L23 2L25 0L27 2L29 0L31 2L33 0" fill="none" stroke="#e87050" stroke-width="0.9"/></svg>
<svg style="left:1888px;top:112px" width="9" height="6" viewBox="0 0 9 6"><path d="M0.8 5.2L4.5 1.5L8.2 5.2" fill="none" stroke="#333" stroke-width="1.8"/></svg>
<svg style="left:1888px;top:746px" width="9" height="6" viewBox="0 0 9 6"><path d="M0.8 0.8L4.5 4.5L8.2 0.8" fill="none" stroke="#333" stroke-width="1.8"/></svg>
<svg style="left:396px;top:761px" width="6" height="9" viewBox="0 0 6 9"><path d="M5 0.8L1.5 4.5L5 8.2" fill="none" stroke="#c0c0c0" stroke-width="1.6"/></svg>
<svg style="left:1873px;top:761px" width="6" height="9" viewBox="0 0 6 9"><path d="M1 0.8L4.5 4.5L1 8.2" fill="none" stroke="#c0c0c0" stroke-width="1.6"/></svg>
<div class="a" style="left:1903px;top:110px;width:8px;height:8px;background:#f2c040;border:1px solid #d0a030"></div>
<div class="a" style="left:1900px;top:122px;width:13px;height:1px;background:#b0b0b0"></div>
<div class="a" style="left:1903px;top:131px;width:9px;height:5px;background:#fdf6d8;border:1px solid #e8cc70"></div>
<div class="a" style="left:1903px;top:235px;width:9px;height:5px;background:#fdf6d8;border:1px solid #e8cc70"></div>
<div class="a" style="left:1903px;top:463px;width:9px;height:5px;background:#fdf6d8;border:1px solid #e8cc70"></div>
<svg style="left:8px;top:787px" width="14" height="15" viewBox="0 0 14 15"><rect x="0.5" y="0.5" width="8" height="14" fill="#faf0f0" stroke="#d0b8b8"/><circle cx="4.5" cy="4" r="2.5" fill="#e89090"/><path d="M4.5 7V11" stroke="#d8a0a0"/><path d="M9 3H13V14.5H9" fill="none" stroke="#c8c8c8"/></svg>
<svg style="left:89px;top:789px" width="13" height="12" viewBox="0 0 13 12"><text x="0" y="10" font-family="Liberation Sans" font-size="12" fill="#9ab8d8">@</text></svg>
<svg style="left:160px;top:787px" width="14" height="16" viewBox="0 0 14 16"><path d="M0.5 0.5H7L10.5 4V12.5H0.5Z" fill="#fcf8ec" stroke="#d0c090"/><path d="M3 5H8M3 7.5H8" stroke="#d0c090"/><path d="M8 10L13 13L8 15.5Z" fill="#f0d080"/></svg>
<svg style="left:250px;top:788px" width="14" height="13" viewBox="0 0 14 13"><rect x="0.5" y="0.5" width="13" height="9.5" fill="#fff" stroke="#2e5b8e" stroke-width="1.4"/><path d="M3 3.5H9M3 6H11" stroke="#2e5b8e" stroke-width="1.2"/><path d="M4 12.3H10M7 10V12" stroke="#2e5b8e" stroke-width="1.5"/></svg>
<svg style="left:319px;top:789px" width="11" height="11" viewBox="0 0 11 11"><path d="M1.5 1.5L9.5 9.5M9.5 1.5L1.5 9.5" stroke="#4a4a4a" stroke-width="3.2" stroke-linecap="round"/><path d="M1.5 1.5L9.5 9.5M9.5 1.5L1.5 9.5" stroke="#fff" stroke-width="1.4" stroke-linecap="round"/></svg>
<svg style="left:1768px;top:787px" width="15" height="14" viewBox="0 0 15 14"><rect x="0.5" y="5.5" width="12" height="8" fill="#eee" stroke="#a8a8a8"/><path d="M6 8L13 2M10 1H14V5" fill="none" stroke="#909090" stroke-width="1.5"/></svg>
<svg style="left:1793px;top:787px" width="13" height="13" viewBox="0 0 13 13"><rect x="0.5" y="0.5" width="12" height="9" fill="#fff" stroke="#7a7a7a" stroke-width="1.4"/><path d="M3 3.5H9M3 6H10" stroke="#8a8a8a"/><path d="M3 12H10M6.5 10V12" stroke="#7a7a7a" stroke-width="1.4"/></svg>
<svg style="left:1814px;top:792px" width="8" height="4" viewBox="0 0 8 4"><path d="M0 0H8L4 4Z" fill="#6a6a6a"/></svg>
<svg style="left:1830px;top:788px" width="15" height="13" viewBox="0 0 15 13"><rect x="0.5" y="1.5" width="13" height="11" fill="#e8f4fc" stroke="#4a6a8a"/><rect x="1" y="2" width="12" height="2" fill="#4a7ab0"/><rect x="7" y="6" width="6" height="6" fill="#f8f0c0"/><path d="M12 0L14 3" stroke="#f0d060"/></svg>
<svg style="left:1852px;top:792px" width="8" height="4" viewBox="0 0 8 4"><path d="M0 0H8L4 4Z" fill="#111"/></svg>
<svg style="left:1869px;top:789px" width="11" height="5" viewBox="0 0 11 5"><rect x="0.5" y="0.5" width="10" height="3.5" fill="#fff" stroke="#444"/></svg>
<svg style="left:1892px;top:789px" width="11" height="11" viewBox="0 0 11 11"><rect x="0.5" y="0.5" width="10" height="10" fill="#fff" stroke="#444"/><path d="M0.5 2H10.5" stroke="#444" stroke-width="1.5"/></svg>
<div class="a" style="left:1635px;top:1019px;width:2px;height:2px;background:#98a4b8"></div>
<div class="a" style="left:1635px;top:1023px;width:2px;height:2px;background:#98a4b8"></div>
<div class="a" style="left:1635px;top:1027px;width:2px;height:2px;background:#98a4b8"></div>
<div class="a" style="left:1635px;top:1031px;width:2px;height:2px;background:#98a4b8"></div>
<div class="a" style="left:1635px;top:1035px;width:2px;height:2px;background:#98a4b8"></div>
<svg style="left:16px;top:1051px" width="17" height="17" viewBox="0 0 17 17"><path d="M0 2.2L7 1.2V8H0ZM8 1L17 0V8H8ZM0 9H7V15.8L0 14.8ZM8 9H17V17L8 16Z" fill="#fff"/></svg>
<svg style="left:63px;top:1050px" width="18" height="18" viewBox="0 0 18 18"><circle cx="11.5" cy="6.5" r="5.3" fill="none" stroke="#fff" stroke-width="1.3"/><path d="M7.7 10.3L1 17" stroke="#fff" stroke-width="1.5"/></svg>
<svg style="left:110px;top:1053px" width="20" height="14" viewBox="0 0 20 14"><rect x="4.5" y="0.5" width="11" height="13" fill="none" stroke="#fff" stroke-width="1.2"/><path d="M2.5 2.5H0.7V11.5H2.5M17.5 2.5H19.3V11.5H17.5" fill="none" stroke="#fff" stroke-width="1.2"/></svg>
<svg style="left:161px;top:1048px" width="18" height="24" viewBox="0 0 18 24"><rect width="18" height="24" fill="#fff"/><rect x="2" y="2" width="14" height="4" fill="#2a2a2a"/><path d="M3 9H6L3 12Z" fill="#2a2a2a"/><path d="M8 9H11L8 12Z" fill="#2a2a2a"/><path d="M13 9H16L13 12Z" fill="#2a2a2a"/><path d="M3 14H6L3 17Z" fill="#2a2a2a"/><path d="M8 14H11L8 17Z" fill="#2a2a2a"/><path d="M13 14H16L13 17Z" fill="#2a2a2a"/><path d="M3 19H6L3 22Z" fill="#2a2a2a"/><path d="M8 19H11L8 22Z" fill="#2a2a2a"/><path d="M13 19H16L13 22Z" fill="#2a2a2a"/></svg>
<svg style="left:207px;top:1050px" width="23" height="21" viewBox="0 0 23 21"><path d="M0.5 2.5H8L10 4.5H22V18H0.5Z" fill="#f4d060"/><rect x="0.5" y="4.5" width="21.5" height="14" fill="#fbe08a"/><path d="M3 10H19V17H14V13H8V17H3Z" fill="#2aa8e0"/><rect x="3" y="17" width="16" height="3" fill="#1a7ac0"/></svg>
<svg style="left:257px;top:1049px" width="22" height="22" viewBox="0 0 22 22"><circle cx="11" cy="11" r="10.5" fill="#3a9a4a"/><path d="M11 11L2 5.8A10.5 10.5 0 0 1 20.1 5.8Z" fill="#dd4433"/><path d="M11 11L20.1 5.8A10.5 10.5 0 0 1 11 21.5Z" fill="#f4c430"/><circle cx="11" cy="11" r="5" fill="#fff"/><circle cx="11" cy="11" r="3.8" fill="#4a7ee8"/></svg>
<svg style="left:304px;top:1048px" width="25" height="24" viewBox="0 0 25 24"><rect width="25" height="24" fill="#4a3a8a"/><circle cx="12.5" cy="12" r="10" fill="none" stroke="#fff" stroke-width="2.6" stroke-dasharray="2.5 1.8"/><circle cx="12.5" cy="12" r="7.5" fill="#3a2a18"/><text x="12.5" y="11" text-anchor="middle" font-family="Liberation Sans" font-size="6.5" font-weight="bold" fill="#f0a040">Java EE</text><text x="12.5" y="17.5" text-anchor="middle" font-family="Liberation Sans" font-size="6.5" font-weight="bold" fill="#f0a040">IDE</text></svg>
<svg style="left:355px;top:1048px" width="22" height="21" viewBox="0 0 22 21"><rect x="0.5" y="0.5" width="21" height="20" fill="#061a48" stroke="#8ab8f0"/><text x="11" y="14.5" text-anchor="middle" font-family="Liberation Sans" font-size="11" font-weight="bold" fill="#9cc8f8">Ps</text></svg>
<svg style="left:1687px;top:1057px" width="12" height="7" viewBox="0 0 12 7"><path d="M0.7 6.3L6 1L11.3 6.3" fill="none" stroke="#fff" stroke-width="1.2"/></svg>
<svg style="left:1717px;top:1055px" width="15" height="11" viewBox="0 0 15 11"><rect width="15" height="11" fill="#76b900"/><ellipse cx="7" cy="5.5" rx="5" ry="3" fill="none" stroke="#2a4a00" stroke-width="1"/><circle cx="7" cy="5.5" r="1.3" fill="#2a4a00"/></svg>
<svg style="left:1749px;top:1052px" width="17" height="15" viewBox="0 0 17 15"><ellipse cx="9" cy="8" rx="7.5" ry="4.5" transform="rotate(40 9 8)" fill="none" stroke="#fff" stroke-width="1.2"/><circle cx="6" cy="9" r="2.2" fill="#fff"/><path d="M2 1L5 6" stroke="#fff" stroke-width="1.4"/></svg>
<svg style="left:1781px;top:1052px" width="17" height="16" viewBox="0 0 17 16"><path d="M0 0H17V12H10.5L8.5 15.5L6.5 12H0Z" fill="#fff"/><path d="M3 3H14M3 6H14M3 9H11" stroke="#222" stroke-width="1.2"/></svg>
<svg style="left:1813px;top:1053px" width="23" height="13" viewBox="0 0 23 13"><rect x="0.5" y="0.5" width="22" height="12" fill="none" stroke="#fff" stroke-width="1.1"/><path d="M3 3.5H20M3 6.5H20M6 9.5H17" stroke="#fff" stroke-width="1.1" stroke-dasharray="1.2 0.9"/></svg>
<div class="a" style="left:1915px;top:1040px;width:1px;height:40px;background:#5a5a5a"></div>
<div class="t" style="left:22.5px;top:5.0px;color:#000;transform:scaleX(0.971);">Java - BTCore/src/btcore/Loader.java - Eclipse</div>
<div class="t" style="left:7.0px;top:26.0px;color:#000;transform:scaleX(0.905);">File</div>
<div class="t" style="left:38.5px;top:26.0px;color:#000;transform:scaleX(0.967);">Edit</div>
<div class="t" style="left:72.5px;top:26.0px;color:#000;transform:scaleX(0.947);">Source</div>
<div class="t" style="left:122.5px;top:26.0px;color:#000;transform:scaleX(0.970);">Refactor</div>
<div class="t" style="left:180.5px;top:26.0px;color:#000;transform:scaleX(0.992);">Navigate</div>
<div class="t" style="left:241.5px;top:26.0px;color:#000;transform:scaleX(0.907);">Search</div>
<div class="t" style="left:290.5px;top:26.0px;color:#000;transform:scaleX(0.977);">Project</div>
<div class="t" style="left:341.5px;top:26.0px;color:#000;transform:scaleX(0.931);">Run</div>
<div class="t" style="left:376.5px;top:26.0px;color:#000;transform:scaleX(1.031);">Window</div>
<div class="t" style="left:434.5px;top:26.0px;color:#000;transform:scaleX(0.992);">Help</div>
<div class="t" style="left:1658.5px;top:52.0px;color:#6a6a6a;transform:scaleX(0.972);">Quick Access</div>
<div class="t" style="left:1813.5px;top:53.5px;color:#000;transform:scaleX(0.816);">Java EE</div>
<div class="t" style="left:1882.5px;top:53.5px;color:#000;transform:scaleX(0.828);">Java</div>
<div class="t" style="left:27.8px;top:85.0px;color:#000;transform:scaleX(0.929);">Package Explorer</div>
<div class="t" style="left:48.5px;top:108.0px;color:#000;transform:scaleX(0.895);">BTCore</div>
<div class="t" style="left:67.5px;top:126.0px;color:#000;transform:scaleX(0.938);">src</div>
<div class="t" style="left:86.5px;top:144.0px;color:#000;transform:scaleX(1.019);">btcore</div>
<div class="t" style="left:105.5px;top:162.0px;color:#000;transform:scaleX(0.914);">BTCore.java</div>
<div class="t" style="left:105.5px;top:180.0px;color:#000;transform:scaleX(1.010);">CustomAction.java</div>
<div class="t" style="left:105.5px;top:198.0px;color:#000;transform:scaleX(0.954);">Graphics.java</div>
<div class="t" style="left:105.5px;top:216.0px;color:#000;transform:scaleX(0.921);">GUI.java</div>
<div class="t" style="left:105.5px;top:234.0px;color:#000;transform:scaleX(0.967);">Loader.java</div>
<div class="t" style="left:105.5px;top:252.0px;color:#000;transform:scaleX(1.006);">LoadingAction.java</div>
<div class="t" style="left:105.5px;top:270.0px;color:#000;transform:scaleX(0.975);">Resolution.java</div>
<div class="t" style="left:105.5px;top:288.0px;color:#000;transform:scaleX(0.931);">Screen.java</div>
<div class="t" style="left:105.5px;top:306.0px;color:#000;transform:scaleX(0.973);">Security.java</div>
<div class="t" style="left:105.5px;top:324.0px;color:#000;transform:scaleX(0.984);">Util.java</div>
<div class="t" style="left:67.1px;top:342.0px;color:#000;transform:scaleX(0.919);">JRE System Library</div>
<div class="t" style="left:167.5px;top:342.0px;color:#9a7a4a;transform:scaleX(0.897);">[JavaSE-1.8]</div>
<div class="t" style="left:67.5px;top:360.0px;color:#000;transform:scaleX(1.033);">doc</div>
<div class="t" style="left:48.5px;top:378.0px;color:#000;transform:scaleX(0.984);">Invasion</div>
<div class="t" style="left:48.5px;top:396.0px;color:#000;transform:scaleX(1.018);">khub</div>
<div class="t" style="left:369.5px;top:84.5px;color:#000;transform:scaleX(0.900);">BTCore.java</div>
<div class="t" style="left:480.2px;top:84.5px;color:#000;transform:scaleX(1.003);">CustomAction.java</div>
<div class="t" style="left:631.2px;top:84.5px;color:#000;transform:scaleX(0.944);">Graphics.java</div>
<div class="t" style="left:751.2px;top:84.5px;color:#000;transform:scaleX(0.905);">GUI.java</div>
<div class="t" style="left:844.5px;top:84.5px;color:#000;transform:scaleX(0.951);">Loader.java</div>
<div class="t" style="left:954.9px;top:84.5px;color:#000;transform:scaleX(0.992);">LoadingAction.java</div>
<div class="t" style="left:1106.5px;top:84.5px;color:#000;transform:scaleX(0.963);">Resolution.java</div>
<div class="t" style="left:1235.5px;top:84.5px;color:#000;transform:scaleX(0.931);">Screen.java</div>
<div class="t" style="left:1345.0px;top:84.5px;color:#000;transform:scaleX(0.966);">Security.java</div>
<div class="t" style="left:1461.5px;top:84.5px;color:#000;transform:scaleX(0.960);">Util.java</div>
<div class="t" style="left:27.8px;top:787.6px;color:#8a8a8a;transform:scaleX(0.961);">Problems</div>
<div class="t" style="left:107.5px;top:787.6px;color:#8a8a8a;transform:scaleX(0.904);">Javadoc</div>
<div class="t" style="left:178.5px;top:787.6px;color:#8a8a8a;transform:scaleX(0.969);">Declaration</div>
<div class="t" style="left:266.9px;top:787.6px;color:#000;transform:scaleX(0.967);">Console</div>
<div class="t" style="left:5.9px;top:809.7px;color:#000;transform:scaleX(0.991);">No consoles to display at this time.</div>
<div class="t" style="left:1344.5px;top:1018.0px;color:#000;transform:scaleX(1.000);">Writable</div>
<div class="t" style="left:1448.5px;top:1018.0px;color:#000;transform:scaleX(0.956);">Smart Insert</div>
<div class="t" style="left:1546.5px;top:1018.0px;color:#000;transform:scaleX(0.873);">1 : 1</div>
<div class="t" style="left:1855.5px;top:1044.5px;color:#fff;transform:scaleX(0.930);">12:10 PM</div>
<div class="t" style="left:1851.0px;top:1061.0px;color:#fff;transform:scaleX(0.967);">12/11/2015</div>
</body></html>
